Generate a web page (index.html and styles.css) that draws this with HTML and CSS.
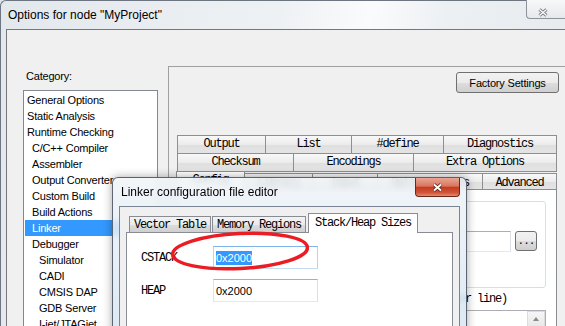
FILE: index.html
```html
<!DOCTYPE html>
<html lang="en">

<head>
    <meta charset="UTF-8" />
    <meta name="viewport" content="width=device-width, initial-scale=1.0" />
    <title>Options for node "MyProject"</title>
    <link rel="stylesheet" href="styles.css">
</head>

<body>
    <div class="window">
        <div class="titlebar">
            <span class="title">Options for node "MyProject"</span>
            <div class="close">
                <svg width="10" height="9" viewBox="0 0 10 9">
                    <path d="M1.5 1.5 L8.5 7.5 M8.5 1.5 L1.5 7.5" stroke="#7d828a" stroke-width="3.2" />
                    <path d="M1.5 1.5 L8.5 7.5 M8.5 1.5 L1.5 7.5" stroke="#fff" stroke-width="1.2" />
                </svg>
            </div>
        </div>

        <div class="client">
            <div class="category">
                <div class="cat-label">Category:</div>
                <ul class="cat-list">
                    <li>General Options</li>
                    <li>Static Analysis</li>
                    <li>Runtime Checking</li>
                    <li class="sub">C/C++ Compiler</li>
                    <li class="sub">Assembler</li>
                    <li class="sub">Output Converter</li>
                    <li class="sub">Custom Build</li>
                    <li class="sub">Build Actions</li>
                    <li class="sub selected">Linker</li>
                    <li class="sub">Debugger</li>
                    <li class="sub2">Simulator</li>
                    <li class="sub2">CADI</li>
                    <li class="sub2">CMSIS DAP</li>
                    <li class="sub2">GDB Server</li>
                    <li class="sub2">I-jet/JTAGjet</li>
                </ul>
            </div>

            <div class="panel">
                <div class="panel-top">
                    <button class="btn factory">Factory Settings</button>
                </div>
                <div class="tab-control">
                    <div class="tab-row row1">
                        <div class="tab">Output</div>
                        <div class="tab">List</div>
                        <div class="tab">#define</div>
                        <div class="tab">Diagnostics</div>
                    </div>
                    <div class="tab-row row2">
                        <div class="tab">Checksum</div>
                        <div class="tab">Encodings</div>
                        <div class="tab">Extra Options</div>
                    </div>
                    <div class="tab-row row3">
                        <div class="tab active">Config</div>
                        <div class="tab">Library</div>
                        <div class="tab">Input</div>
                        <div class="tab">Optimizations</div>
                        <div class="tab">Advanced</div>
                    </div>
                    <div class="tab-body">
                        <div class="group">
                            <div class="check">Override default</div>
                            <div class="path-row">
                                <div class="edit plain"></div>
                                <button class="btn dots">...</button>
                            </div>
                        </div>
                        <div class="mono-text">Configuration file symbol definitions: (one per line)</div>
                        <div class="textarea">
                            <div class="scroll"><div class="arrow"></div></div>
                        </div>
                    </div>
                </div>
            </div>
        </div>
    </div>

    <div class="dialog">
        <div class="dlg-title">
            <span class="title">Linker configuration file editor</span>
            <div class="dlg-close">
                <svg width="11" height="9" viewBox="0 0 11 9">
                    <path d="M2 1.5 L9 7.5 M9 1.5 L2 7.5" stroke="#5a1e14" stroke-width="3.6" />
                    <path d="M2 1.5 L9 7.5 M9 1.5 L2 7.5" stroke="#fff" stroke-width="2" />
                </svg>
            </div>
        </div>
        <div class="dlg-client">
            <div class="dlg-tabs">
                <div class="dtab">Vector Table</div>
                <div class="dtab">Memory Regions</div>
                <div class="dtab active">Stack/Heap Sizes</div>
            </div>
            <div class="dlg-panel">
                <div class="field">
                    <span class="field-label">CSTACK</span>
                    <div class="edit focused"><span class="sel">0x2000</span></div>
                </div>
                <div class="field">
                    <span class="field-label">HEAP</span>
                    <div class="edit plain">0x2000</div>
                </div>
            </div>
        </div>
    </div>

    <svg class="mark" width="146" height="46" viewBox="0 0 146 46">
        <ellipse cx="72" cy="23" rx="67.5" ry="17.5" transform="rotate(-3 72 23)" fill="none" stroke="#ec1c24" stroke-width="3.5" />
    </svg>
</body>

</html>
```

FILE: styles.css
```css
:root{
    --face: #f0f0f0;
    --edge: #898c95;
    --mono: "Liberation Mono", "DejaVu Sans Mono", monospace;
}

body{
    margin: 0;
    width: 565px;
    height: 326px;
    overflow: hidden;
    position: relative;
    font-family: "Liberation Sans", Arial, sans-serif;
    font-size: 11px;
    color: #000;
    background: #dfe6ee;
}

/* main window */
.window{
    height: 100%;
    box-sizing: border-box;
    border: 1px solid #6d7580;
    border-right: none;
    border-bottom: none;
    border-radius: 6px 0 0 0;
    padding-left: 5px;
    display: flex;
    flex-direction: column;
    background: linear-gradient(100deg, #e3e8ed 0%, #eef1f4 45%, #fafbfc 60%, #edf0f3 72%, #e5e9ed 100%);
}
.titlebar{
    height: 28px;
    display: flex;
    justify-content: space-between;
    align-items: flex-start;
    flex-shrink: 0;
}
.title{
    font-size: 12px;
    line-height: 16px;
    margin-top: 6px;
    padding-left: 2px;
    white-space: nowrap;
}
.close{
    width: 39px;
    height: 19px;
    margin-top: -1px;
    box-sizing: border-box;
    border: 1px solid #8d939a;
    border-top: none;
    border-right: none;
    border-radius: 0 0 0 4px;
    background: linear-gradient(#f7f8f9, #e6e9ec);
    padding: 8px 0 0 11px;
}
.close svg{
    display: block;
}
.client{
    flex: 1;
    min-height: 0;
    border-left: 1px solid #777;
    border-top: 1px solid #777;
    background: var(--face);
    display: flex;
    padding-left: 16px;
    overflow: hidden;
}

/* category list */
.category{
    width: 135px;
    flex-shrink: 0;
    padding-top: 39px;
    display: flex;
    flex-direction: column;
}
.cat-label{
    line-height: 14px;
    padding-left: 3px;
    margin-bottom: 7px;
    letter-spacing: -0.2px;
}
.cat-list{
    flex: 1;
    margin: 0;
    padding: 1px;
    list-style: none;
    background: #fff;
    border: 1px solid #828790;
}
.cat-list li{
    height: 16px;
    line-height: 16px;
    padding-left: 2px;
    white-space: nowrap;
    overflow: hidden;
    letter-spacing: -0.2px;
}
.cat-list .sub{
    padding-left: 7px;
}
.cat-list .sub2{
    padding-left: 14px;
}
.cat-list .selected{
    background: #3399ff;
    color: #fff;
}

/* right panel */
.panel{
    flex: 1;
    margin: 36px 0 0 10px;
    border-left: 1px solid #a0a0a0;
    border-top: 1px solid #a0a0a0;
    display: flex;
    flex-direction: column;
}
.panel-top{
    display: flex;
    justify-content: flex-end;
    padding: 5px 6px 0 0;
}
.btn{
    box-sizing: border-box;
    border: 1px solid #707070;
    border-radius: 3px;
    background: linear-gradient(#f2f2f2, #ebebeb 50%, #dddddd 51%, #cfcfcf);
    font-family: "Liberation Sans", Arial, sans-serif;
    font-size: 11px;
    color: #000;
    padding: 0;
    letter-spacing: -0.2px;
}
.factory{
    width: 103px;
    height: 21px;
}
.tab-control{
    flex: 1;
    margin: 42px 8px 0 8px;
    display: flex;
    flex-direction: column;
}
.tab-row{
    display: grid;
    padding-left: 1px;
}
.row1{
    grid-template-columns: 88px 86px 92px 1fr;
}
.row2{
    grid-template-columns: 116px 120px 1fr;
    margin-top: -1px;
}
.row3{
    grid-template-columns: 67px 68px 65px 105px 1fr;
    margin-top: -1px;
    align-items: end;
}
.tab{
    height: 19px;
    box-sizing: border-box;
    margin-left: -1px;
    border: 1px solid #8e8f8f;
    background: linear-gradient(#f8f8f8, #ececec 50%, #dfdfdf 51%, #e4e4e4);
    font-family: var(--mono);
    font-size: 12px;
    letter-spacing: -1.2px;
    line-height: 17px;
    text-align: center;
    white-space: nowrap;
}
.row3 .tab{
    height: 16px;
    border-bottom: none;
    padding-top: 2px;
    line-height: 15px;
}
.row3 .tab.active{
    height: 19px;
    margin: 0 0 -1px -2px;
    padding-top: 0;
    line-height: 17px;
    background: #fff;
    position: relative;
    z-index: 1;
}
.tab-body{
    flex: 1;
    border: 1px solid var(--edge);
    background: #fff;
    padding: 11px 10px 0 11px;
}
.group{
    height: 87px;
    box-sizing: border-box;
    border: 1px solid #d5dfe5;
    border-radius: 3px;
    padding: 6px 8px 0 8px;
}
.check{
    height: 17px;
    line-height: 17px;
    margin-bottom: 6px;
}
.path-row{
    display: flex;
    gap: 4px;
}
.path-row .edit{
    flex: 1;
    height: 21px;
}
.dots{
    width: 22px;
    height: 20px;
    font-family: var(--mono);
    letter-spacing: -1px;
}
.mono-text{
    font-family: var(--mono);
    font-size: 12px;
    letter-spacing: -1.2px;
    line-height: 14px;
    margin-top: 4px;
    white-space: nowrap;
}
.textarea{
    margin-top: 4px;
    height: 40px;
    border: 1px solid #abadb3;
    display: flex;
    justify-content: flex-end;
}
.scroll{
    width: 18px;
    background: #f4f4f4;
}
.arrow{
    height: 16px;
    box-sizing: border-box;
    border: 1px solid #dcdcdc;
    background: linear-gradient(#f6f6f6, #e8e8e8);
    position: relative;
}
.arrow::after{
    content: "";
    position: absolute;
    left: 5px;
    top: 5px;
    border: 3.5px solid transparent;
    border-bottom: 4px solid #8a8a8a;
    border-top: none;
}

/* edit boxes */
.edit{
    box-sizing: border-box;
    border: 1px solid;
    background: #fff;
    padding: 0 2px;
    display: flex;
    align-items: center;
    font-size: 11px;
}
.plain{
    border-color: #abadb3 #dbdfe6 #e3e9ef #e2e3ea;
}
.focused{
    border-color: #7eb4ea #b7d5f0 #c5ddf3 #b7d5f0;
}
.sel{
    background: #3399ff;
    color: #fff;
    line-height: 14px;
}

/* floating dialog */
.dialog{
    position: absolute;
    z-index: 2;
    left: 112px;
    top: 177px;
    width: 355px;
    height: 170px;
    box-sizing: border-box;
    border: 1px solid rgba(45, 55, 70, 0.75);
    border-radius: 6px 6px 0 0;
    padding: 0 6px;
    display: flex;
    flex-direction: column;
    background: linear-gradient(rgba(240, 244, 248, 0.86), rgba(214, 228, 242, 0.88));
    backdrop-filter: blur(3px);
    box-shadow: 0 0 10px rgba(0, 0, 0, 0.35);
}
.dlg-title{
    height: 28px;
    flex-shrink: 0;
    display: flex;
    justify-content: space-between;
    align-items: flex-start;
}
.dlg-close{
    width: 45px;
    height: 19px;
    box-sizing: border-box;
    border: 1px solid #6b271b;
    border-top: none;
    border-radius: 0 0 4px 4px;
    background: linear-gradient(#e9a595, #d9765f 45%, #c43d22 52%, #cf5236 80%, #e48a6d);
    display: flex;
    justify-content: center;
    align-items: center;
}
.dlg-close svg{
    display: block;
}
.dlg-client{
    flex: 1;
    border: 1px solid #7a8594;
    background: var(--face);
    padding: 6px 6px 0 6px;
    display: flex;
    flex-direction: column;
}
.dlg-tabs{
    display: flex;
    align-items: flex-end;
    padding-left: 3px;
}
.dtab{
    height: 16px;
    box-sizing: border-box;
    border: 1px solid var(--edge);
    border-bottom: none;
    padding: 0 4px;
    background: linear-gradient(#f2f2f2, #ebebeb 50%, #dddddd 51%, #cfcfcf);
    font-family: var(--mono);
    font-size: 12px;
    letter-spacing: -1.2px;
    line-height: 16px;
    white-space: nowrap;
}
.dtab + .dtab{
    margin-left: 1px;
}
.dtab.active{
    height: 20px;
    margin: 0 0 -1px 2px;
    padding: 0 6px;
    background: #fff;
    line-height: 18px;
    position: relative;
    z-index: 1;
}
.dlg-panel{
    flex: 1;
    border: 1px solid var(--edge);
    background: #fff;
    padding: 13px 14px;
    display: flex;
    flex-direction: column;
    gap: 10px;
}
.field{
    display: flex;
    align-items: center;
    height: 23px;
}
.field-label{
    width: 72px;
    font-family: var(--mono);
    font-size: 12px;
    letter-spacing: -1.2px;
}
.field .edit{
    width: 105px;
    height: 23px;
}

/* red mark drawn over the dialog */
.mark{
    position: absolute;
    z-index: 3;
    left: 168px;
    top: 228px;
}
```
